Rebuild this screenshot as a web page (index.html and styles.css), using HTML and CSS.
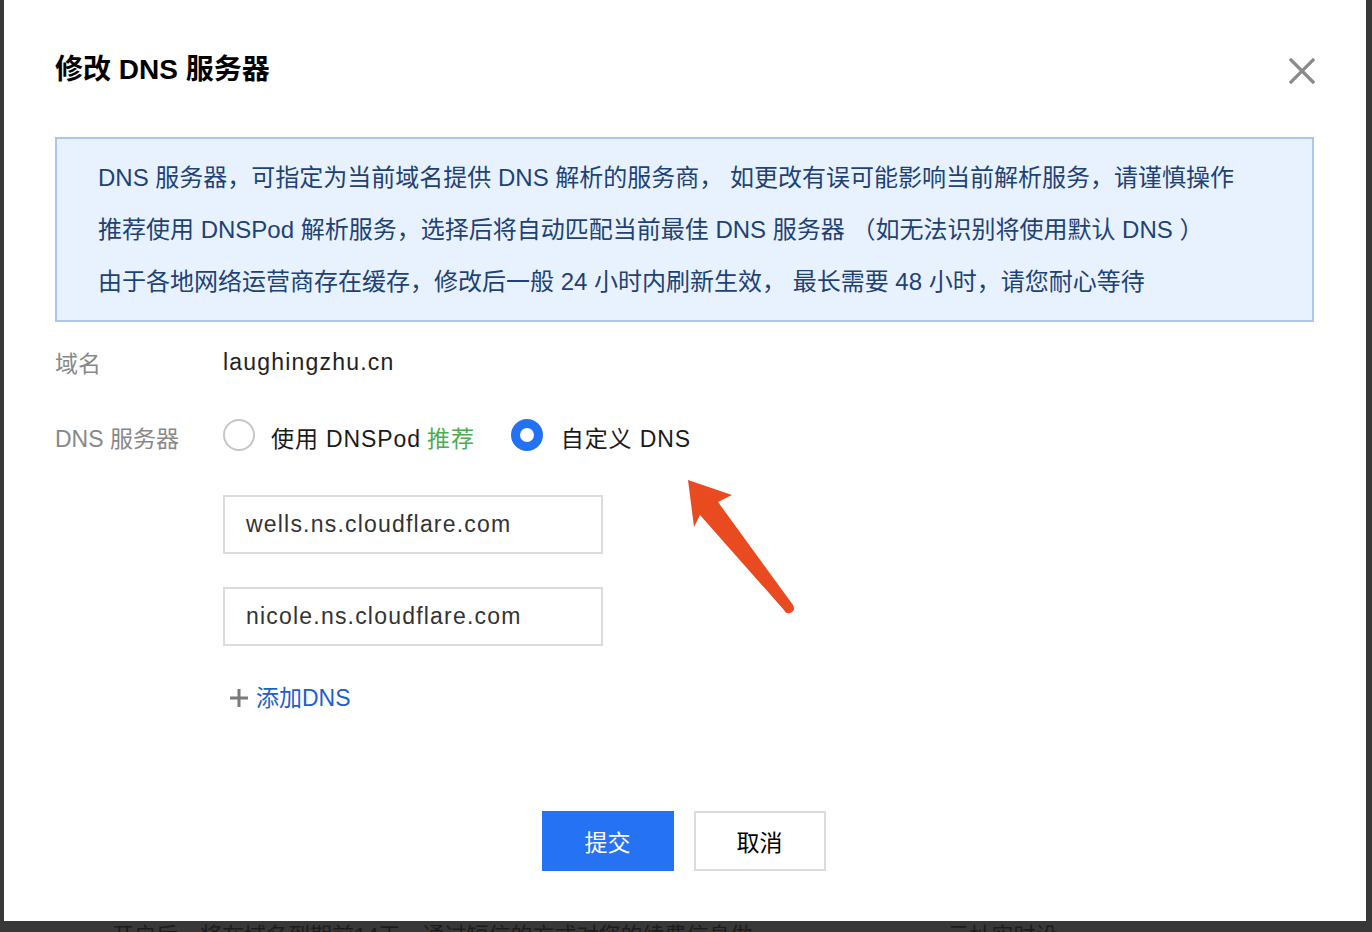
FILE: index.html
```html
<!DOCTYPE html>
<html lang="zh-CN">
<head>
    <meta charset="UTF-8">
    <meta name="viewport" content="width=device-width, initial-scale=1.0">
    <title>修改 DNS 服务器</title>
    <link rel="stylesheet" href="styles.css">
</head>
<body>
    <div class="modal">
        <div class="modal-header">
            <h1>修改 DNS 服务器</h1>
            <svg class="close" width="26" height="26" viewBox="0 0 26 26">
                <path d="M2 2 L24 24 M24 2 L2 24" stroke="#8a8a8a" stroke-width="3.2" stroke-linecap="square"/>
            </svg>
        </div>

        <div class="notice">
            <p>DNS 服务器，可指定为当前域名提供 DNS 解析的服务商， 如更改有误可能影响当前解析服务，请谨慎操作</p>
            <p>推荐使用 DNSPod 解析服务，选择后将自动匹配当前最佳 DNS 服务器 （如无法识别将使用默认 DNS ）</p>
            <p>由于各地网络运营商存在缓存，修改后一般 24 小时内刷新生效， 最长需要 48 小时，请您耐心等待</p>
        </div>

        <div class="form-row">
            <span class="label">域名</span>
            <span class="value">laughingzhu.cn</span>
        </div>

        <div class="form-row radios">
            <span class="label">DNS 服务器</span>
            <label class="radio"><span class="dot"></span>使用 DNSPod <em>推荐</em></label>
            <label class="radio checked"><span class="dot"></span>自定义 DNS</label>
        </div>

        <div class="dns-list">
            <div class="input">wells.ns.cloudflare.com</div>
            <div class="input">nicole.ns.cloudflare.com</div>
            <a class="add-dns">
                <svg width="20" height="20" viewBox="0 0 20 20">
                    <path d="M10 1 V19 M1 10 H19" stroke="#7a7a7a" stroke-width="3"/>
                </svg>
                添加DNS
            </a>
        </div>

        <div class="actions">
            <button class="btn primary">提交</button>
            <button class="btn">取消</button>
        </div>

        <svg class="arrow" width="120" height="150" viewBox="680 470 120 150">
            <path d="M688 480 L732 495 L718 502 L793 605 Q796 611 790 613 Q786 614 784 610 L700 515 L694 527 Z" fill="#ea4a1f"/>
        </svg>
    </div>
    <div class="behind">
        <span>开启后，将在域名到期前14天，通过短信的方式对您的续费信息做</span>
        <span class="right">示址实时设</span>
    </div>
</body>
</html>
```

FILE: styles.css
```css
body {
    margin: 0;
    background-color: #383838;
    font-family: 'Liberation Sans', 'Noto Sans CJK SC', sans-serif;
    overflow: hidden;
}
.modal {
    position: relative;
    box-sizing: border-box;
    width: 1362px;
    height: 921px;
    margin-left: 4px;
    padding: 46px 52px 0 51px;
    background-color: #fff;
}
.modal-header {
    display: flex;
    justify-content: space-between;
    align-items: center;
    height: 42px;
}
.modal-header h1 {
    margin: 0;
    font-size: 28px;
    font-weight: bold;
    color: #000;
}
.close {
    margin-right: -1px;
    margin-top: 8px;
}
.notice {
    margin-top: 49px;
    padding: 13px 41px 12px;
    background-color: #e8f2fe;
    border: 2px solid #a9c9ec;
    color: #1e4275;
    font-size: 24px;
}
.notice p {
    margin: 0;
    line-height: 52px;
    white-space: nowrap;
}
.form-row {
    display: flex;
    align-items: center;
    height: 48px;
    margin-top: 16px;
    font-size: 23px;
}
.form-row .label {
    width: 168px;
    color: #888;
}
.form-row .value {
    color: #222;
    letter-spacing: 1.2px;
}
.radios {
    margin-top: 27px;
}
.radio {
    display: flex;
    align-items: center;
    margin-right: 36px;
    color: #1a1a1a;
    font-size: 23px;
    line-height: 32px;
    letter-spacing: 0.9px;
    padding-top: 4px;
}
.radio em {
    font-style: normal;
    color: #4bad4f;
    margin-left: 6px;
}
.radio .dot {
    box-sizing: border-box;
    width: 32px;
    height: 32px;
    margin: -8px 16px 0 0;
    border: 2px solid #c6c6c6;
    border-radius: 50%;
}
.radio.checked .dot {
    border: 9px solid #2372f5;
    margin-right: 18px;
}
.dns-list {
    margin: 34px 0 0 168px;
}
.input {
    box-sizing: border-box;
    width: 380px;
    height: 59px;
    margin-bottom: 33px;
    padding-left: 21px;
    border: 2px solid #dcdcdc;
    color: #333;
    font-size: 23px;
    line-height: 55px;
    letter-spacing: 1.2px;
}
.add-dns {
    display: flex;
    align-items: center;
    padding-top: 3px;
    color: #1c5fcd;
    font-size: 23px;
    line-height: 32px;
}
.add-dns svg {
    margin: 0 7px 0 6px;
}
.actions {
    display: flex;
    justify-content: center;
    gap: 20px;
    margin-top: 97px;
    padding-right: 2px;
}
.btn {
    box-sizing: border-box;
    width: 132px;
    height: 60px;
    border: 2px solid #dcdcdc;
    background-color: #fff;
    color: #000;
    font-family: inherit;
    font-size: 23px;
    cursor: pointer;
}
.btn.primary {
    border-color: #2672f5;
    background-color: #2672f5;
    color: #fff;
}
.arrow {
    position: absolute;
    left: 676px;
    top: 470px;
}
.behind {
    display: flex;
    height: 11px;
    overflow: hidden;
    padding: 2px 0 0 112px;
    color: #1c1c1c;
    font-size: 22px;
    line-height: 26px;
}
.behind .right {
    margin-left: 195px;
}
```
